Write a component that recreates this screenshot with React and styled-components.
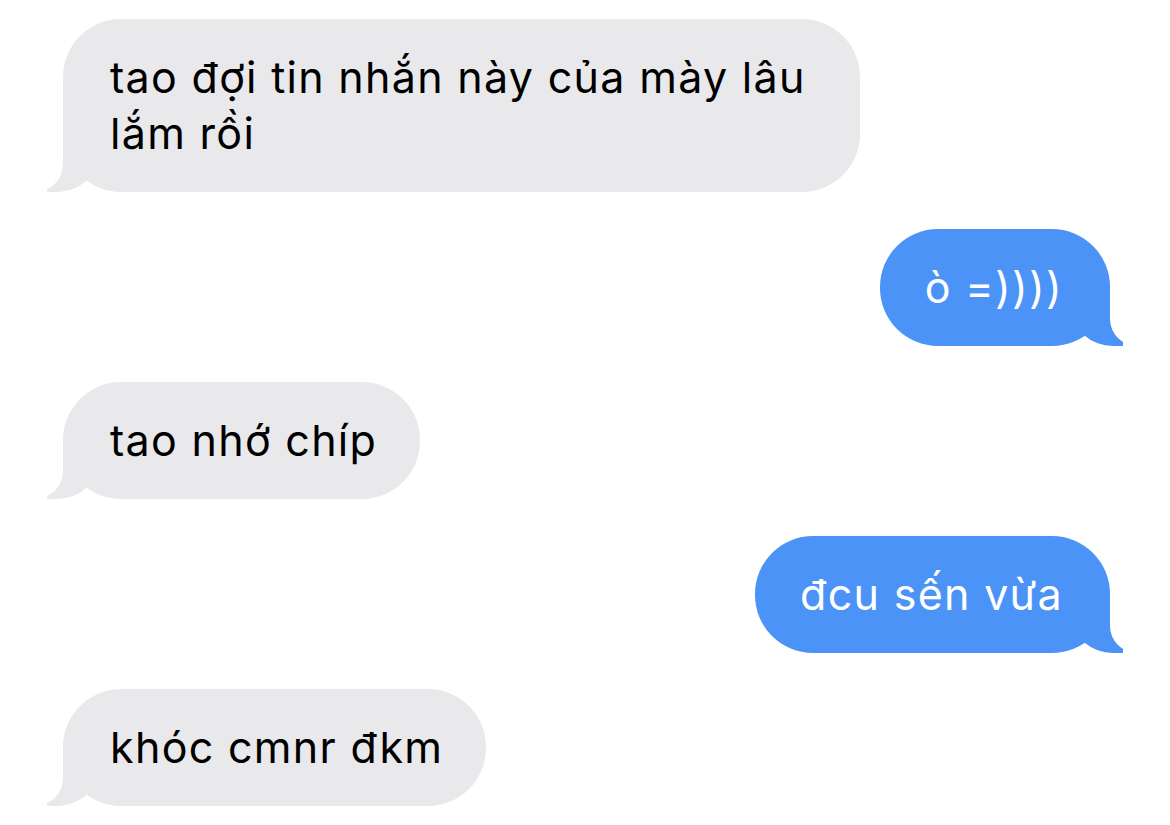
import React from 'react';
import styled, {createGlobalStyle} from 'styled-components';

const GlobalStyle = createGlobalStyle`
  html, body {
    margin: 0;
    padding: 0;
    background: #ffffff;
  }
  body {
    font-family: Inter, "Noto Sans", "Liberation Sans", sans-serif;
    -webkit-font-smoothing: antialiased;
  }
`;

const Thread = styled.div`
  width: 1170px;
  height: 825px;
  box-sizing: border-box;
  padding: 19px 60px 0 63px;
  display: flex;
  flex-direction: column;
  gap: 36.5px;
  overflow: hidden;
  background: #ffffff;
`;

// bong bóng tin nhắn, đuôi vẽ bằng ::before (màu bong bóng) và ::after (nền trắng khoét)
const Bubble = styled.div`
  position: relative;
  align-self: ${props => (props.$mine ? 'flex-end' : 'flex-start')};
  max-width: 797px;
  box-sizing: border-box;
  padding: ${props => (props.$mine ? '30px 47px 31px 45px' : '30px 43px 31px 47px')};
  border-radius: 58px;
  background: ${props => (props.$mine ? '#4b93f6' : '#e9e9eb')};
  color: ${props => (props.$mine ? '#ffffff' : '#000000')};
  font-size: 43px;
  line-height: 56px;
  letter-spacing: 1.3px;

  &::before {
    content: '';
    position: absolute;
    bottom: 0;
    height: 62px;
    width: 50px;
    background: inherit;
    ${props => (props.$mine
      ? 'right: -13px; border-bottom-left-radius: 40px 35px;'
      : 'left: -16px; border-bottom-right-radius: 40px 35px;')}
  }

  &::after {
    content: '';
    position: absolute;
    bottom: 0;
    height: 62px;
    width: 65px;
    background: #ffffff;
    ${props => (props.$mine
      ? 'right: -65px; border-bottom-left-radius: 27px;'
      : 'left: -65px; border-bottom-right-radius: 28px;')}
  }
`;

const messages = [
  {mine: false, text: 'tao đợi tin nhắn này của mày lâu lắm rồi'},
  {mine: true, text: 'ò =))))'},
  {mine: false, text: 'tao nhớ chíp'},
  {mine: true, text: 'đcu sến vừa'},
  {mine: false, text: 'khóc cmnr đkm'},
];

const App = () => {
  return (
    <>
      <GlobalStyle />
      <Thread>
        {messages.map((m, i) => (
          <Bubble key={i} $mine={m.mine}>{m.text}</Bubble>
        ))}
      </Thread>
    </>
  );
};

export default App;
